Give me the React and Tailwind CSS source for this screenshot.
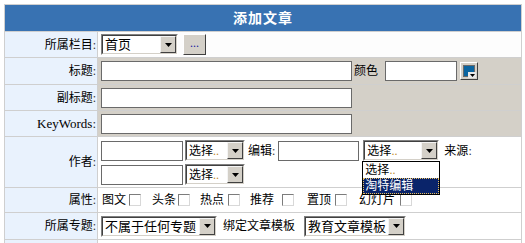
import React from "react";

function Arrow() {
  return (
    <div className="flex h-full w-[16px] shrink-0 items-center justify-center border border-t-[#f4f4f4] border-l-[#f4f4f4] border-b-[#404040] border-r-[#404040] bg-[#d4d0c8]">
      <svg width="7" height="4" viewBox="0 0 7 4">
        <path d="M0 0H7L3.5 4Z" fill="#000" />
      </svg>
    </div>
  );
}

function Select({ w, text, small, dots }) {
  return (
    <div className={`${w} flex h-[21px] shrink-0 border border-t-[#808080] border-l-[#808080] border-b-[#ffffff] border-r-[#ffffff]`}>
      <div className="flex min-w-0 flex-1 border border-t-[#404040] border-l-[#404040] border-b-[#d4d0c8] border-r-[#d4d0c8] bg-white">
        <div className={`flex flex-1 items-center overflow-hidden whitespace-nowrap pl-[2px] leading-none ${small ? "text-[12px]" : "text-[13px]"}`}>
          {text}
          {dots && <span className="text-[#c08a30]">..</span>}
        </div>
        <Arrow />
      </div>
    </div>
  );
}

function Input({ w }) {
  return <div className={`${w} h-[20px] shrink-0 border border-[#6a6a6a] bg-white`} />;
}

function Check({ ml }) {
  return <div className={`${ml} h-[12px] w-[12px] shrink-0 border border-t-[#7c7c7c] border-l-[#7c7c7c] border-b-[#d8d8d8] border-r-[#d8d8d8] bg-white`} />;
}

function Label({ children, serif }) {
  return (
    <div className={`flex items-center justify-end bg-[#e9f2fd] pr-[1px] text-[12px] text-black ${serif ? "font-['Liberation_Serif',serif] text-[13px]" : ""}`}>
      {children}
      <span className="text-[#333]">:</span>
    </div>
  );
}

export default function App() {
  return (
    <div className="h-[243px] w-[525px] overflow-hidden bg-white pl-[4px] pt-[4px] font-['Liberation_Serif','Noto_Sans_CJK_SC',serif] text-black">
      <div className="flex w-[518px] flex-col gap-px bg-[#cfcfcf] p-px">
        <div className="flex h-[26px] items-center justify-center bg-[#3872b2] text-[14px] font-bold tracking-[1px] text-white">
          添加文章
        </div>

        <div className="grid h-[25px] grid-cols-[92px_423px] gap-px">
          <Label>所属栏目</Label>
          <div className="flex items-center bg-[#fdfdfd] pl-[3px]">
            <Select w="w-[77px]" text="首页" />
            <div className="ml-[5px] flex h-[21px] w-[23px] items-center justify-center border border-t-[#ffffff] border-l-[#ffffff] border-b-[#404040] border-r-[#404040] bg-[#d4d0c8] pb-[3px] text-[12px] text-[#1a1aa0]">
              ...
            </div>
          </div>
        </div>

        <div className="grid h-[26px] grid-cols-[92px_423px] gap-px">
          <Label>标题</Label>
          <div className="flex items-center bg-[#d4d0c8] pl-[3px] text-[12px]">
            <Input w="w-[251px]" />
            <span className="ml-[2px]">颜色</span>
            <div className="ml-[7px]"><Input w="w-[72px]" /></div>
            <div className="relative ml-[3px] h-[18px] w-[18px] border border-t-[#ffffff] border-l-[#ffffff] border-b-[#404040] border-r-[#404040] bg-[#d4d0c8] p-[2px]">
              <div className="h-full w-full border border-[#6a6a6a] bg-[#0a64a0]" />
              <div className="absolute bottom-[1px] right-[1px] flex h-[6px] w-[8px] items-center justify-center bg-[#e8e8e8]">
                <svg width="5" height="3" viewBox="0 0 5 3"><path d="M0 0H5L2.5 3Z" fill="#000" /></svg>
              </div>
            </div>
          </div>
        </div>

        <div className="grid h-[25px] grid-cols-[92px_423px] gap-px">
          <Label>副标题</Label>
          <div className="flex items-center bg-[#d4d0c8] pl-[3px]">
            <Input w="w-[251px]" />
          </div>
        </div>

        <div className="grid h-[25px] grid-cols-[92px_423px] gap-px">
          <Label serif>KeyWords</Label>
          <div className="flex items-center bg-[#d4d0c8] pl-[3px]">
            <Input w="w-[251px]" />
          </div>
        </div>

        <div className="grid h-[50px] grid-cols-[92px_423px] gap-px">
          <Label>作者</Label>
          <div className="flex flex-col gap-[3px] bg-white pl-[3px] pt-[3px] text-[12px]">
            <div className="flex h-[21px] items-center">
              <Input w="w-[82px]" />
              <div className="ml-[2px]"><Select w="w-[60px]" text="选择" small dots /></div>
              <span className="ml-[3px]">编辑<span className="text-[#333]">:</span></span>
              <div className="ml-[3px]"><Input w="w-[81px]" /></div>
              <div className="relative ml-[4px]">
                <Select w="w-[76px]" text="选择" small dots />
                <div className="absolute left-[-1px] top-[21px] z-10 flex w-[78px] flex-col border border-black bg-white text-[12px] leading-none">
                  <div className="flex h-[16px] items-center pl-[2px]">选择<span className="text-[#c08a30]">..</span></div>
                  <div className="flex h-[16px] items-center border border-dotted border-[#e8c060] bg-[#0a246a] pl-[1px] text-white">淘特编辑</div>
                </div>
              </div>
              <span className="ml-[5px]">来源<span className="text-[#333]">:</span></span>
            </div>
            <div className="flex h-[21px] items-center">
              <Input w="w-[82px]" />
              <div className="ml-[2px]"><Select w="w-[60px]" text="选择" small dots /></div>
            </div>
          </div>
        </div>

        <div className="grid h-[24px] grid-cols-[92px_423px] gap-px">
          <Label>属性</Label>
          <div className="flex items-center bg-white pl-[4px] text-[12px]">
            <span>图文</span><Check ml="ml-[3px]" />
            <span className="ml-[11px]">头条</span><Check ml="ml-[2px]" />
            <span className="ml-[10px]">热点</span><Check ml="ml-[4px]" />
            <span className="ml-[10px]">推荐</span><Check ml="ml-[8px]" />
            <span className="ml-[13px]">置顶</span><Check ml="ml-[4px]" />
            <span className="ml-[12px]">幻灯片</span><Check ml="ml-[5px]" />
          </div>
        </div>

        <div className="grid h-[26px] grid-cols-[92px_423px] gap-px">
          <Label>所属专题</Label>
          <div className="flex items-center bg-white pl-[3px] text-[12px]">
            <Select w="w-[116px]" text="不属于任何专题" />
            <span className="ml-[6px]">绑定文章模板</span>
            <div className="ml-[9px]"><Select w="w-[102px]" text="教育文章模板" /></div>
          </div>
        </div>

        <div className="grid h-[26px] grid-cols-[92px_423px] gap-px">
          <div className="bg-[#e9f2fd]" />
          <div className="bg-white" />
        </div>
      </div>
    </div>
  );
}
